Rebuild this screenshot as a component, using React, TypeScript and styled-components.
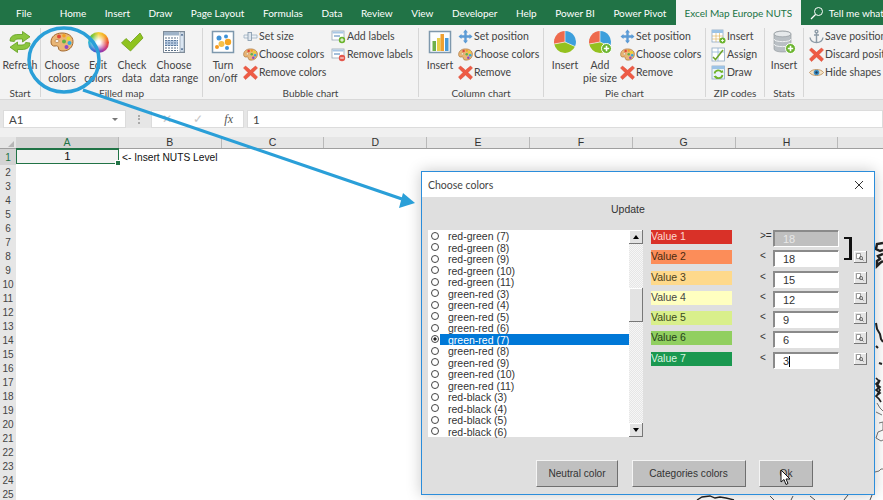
import React from "react";
import styled, { createGlobalStyle } from "styled-components";

const GlobalStyle = createGlobalStyle`
  html, body {
    margin: 0;
    padding: 0;
    background: #fff;
    overflow: hidden;
  }
`;

const ui = `Lato, "Open Sans", sans-serif`;
const dlg = `"Liberation Sans", Arial, sans-serif`;

/* ---------- icons ---------- */

const AddBadge = () => (
  <g>
    <circle cx="18.5" cy="18.5" r="5" fill="#6ab42d" stroke="#fff" strokeWidth="1" />
    <path d="M18.5 15.8v5.4M15.8 18.5h5.4" stroke="#fff" strokeWidth="1.6" />
  </g>
);

const Refresh = () => (
  <svg width="24" height="24" viewBox="0 0 24 24">
    <g fill="#8cc63f" stroke="#5f9e1e" strokeWidth="0.8">
      <path d="M2 11C2 6 6 4.5 10 4.5h4.5V1.5L22 6.8 14.5 12V9H10C8 9 6.8 10 6.3 11.5Z" />
      <path d="M22 13c0 5-4 6.5-8 6.5H9.5v3L2 17.200 9.500 12v3H14c2 0 3.200-1 3.700-2.500Z" />
    </g>
  </svg>
);

const Palette = ({ size = 24 }: { size?: number }) => (
  <svg width={size} height={size} viewBox="0 0 24 24">
    <path
      d="M12 3C5 3 1 7 1 12c0 3 2 4.500 4 4 2-.6 3.500.3 3.500 2 0 2 1.500 3 4.500 3 6 0 10-4 10-9.500S18 3 12 3Z"
      fill="#e9b676"
      stroke="#a4682c"
      strokeWidth="1"
    />
    <ellipse cx="7" cy="11" rx="2" ry="1.500" fill="#fff" stroke="#a4682c" strokeWidth=".6" />
    <circle cx="9" cy="6.500" r="2" fill="#e0473a" />
    <circle cx="14" cy="5.800" r="1.800" fill="#f3a01f" />
    <circle cx="18.500" cy="8.500" r="2" fill="#e8d92c" />
    <circle cx="19.500" cy="13" r="2" fill="#35a9dc" />
    <circle cx="16.500" cy="17" r="2" fill="#9246c4" />
    <circle cx="14" cy="11.500" r="2" fill="#5fb446" />
  </svg>
);

const Check = () => (
  <svg width="24" height="24" viewBox="0 0 24 24">
    <path d="M1.500 13 6 8.500l4.500 4L20 3l3 5-12.500 13Z" fill="#8fc31f" stroke="#6d9e18" strokeWidth=".8" />
  </svg>
);

const DataRange = () => (
  <svg width="24" height="24" viewBox="0 0 24 24">
    <rect x="1.500" y="1.500" width="21" height="21" fill="#fff" stroke="#7f8c99" />
    <rect x="2" y="2" width="15" height="3.500" fill="#9fb3c8" />
    <path d="M3 8h13M3 10.500h13M3 13h13M3 15.500h13M3 18h13M3 20.500h13" stroke="#5b6f86" strokeWidth="1" strokeDasharray="2 1" />
    <rect x="3" y="10" width="13" height="6" fill="#5b86b8" opacity=".45" />
    <rect x="18" y="2" width="4" height="20" fill="#dbe6f2" stroke="#7f8c99" strokeWidth=".6" />
    <path d="M20 3.500l1.300 2h-2.600ZM20 20.500l1.300-2h-2.600Z" fill="#2f4f78" />
  </svg>
);

const Bubbles = () => (
  <svg width="24" height="24" viewBox="0 0 24 24">
    <rect x="1.500" y="1.500" width="21" height="21" fill="#fff" stroke="#7e98ad" strokeWidth="1.500" />
    <circle cx="8" cy="8" r="2.500" fill="#3f93d8" />
    <circle cx="15" cy="6.500" r="2" fill="#3f93d8" />
    <circle cx="17" cy="12" r="3.200" fill="#f5a623" />
    <circle cx="10.500" cy="14" r="3" fill="#f5c04a" />
    <circle cx="6" cy="17" r="2" fill="#f59a23" />
    <circle cx="16" cy="18" r="2" fill="#3f93d8" />
  </svg>
);

const Columns = () => (
  <svg width="24" height="24" viewBox="0 0 24 24">
    <rect x="1.500" y="1.500" width="21" height="21" fill="#fbfdff" stroke="#7e98ad" strokeWidth="1.500" />
    <rect x="4.500" y="11" width="3.500" height="10" fill="#6fb04a" />
    <rect x="9" y="8" width="3.500" height="13" fill="#e8cf4a" />
    <rect x="12.500" y="4" width="3.500" height="17" fill="#f0a030" />
    <rect x="17" y="8" width="3.500" height="13" fill="#4a9ad8" />
  </svg>
);

const Pie = ({ badge = false }: { badge?: boolean }) => (
  <svg width="24" height="24" viewBox="0 0 24 24">
    <path d="M12 12V1a11 11 0 0 1 10 15.500Z" fill="#3d9fdc" />
    <path d="M12 12l10 4.500A11 11 0 0 1 1.200 14Z" fill="#94c11f" />
    <path d="M12 12L1.200 14A11 11 0 0 1 12 1Z" fill="#ee6a4d" />
    <path d="M12 1v11l10 4.500M12 12 1.200 14" stroke="#fff" strokeWidth=".6" fill="none" />
    {badge && <AddBadge />}
  </svg>
);

const Database = () => (
  <svg width="24" height="24" viewBox="0 0 24 24">
    <path d="M2 4c0-4 17-4 17 0v15c0 4-17 4-17 0Z" fill="#b9bfc4" stroke="#8d9398" strokeWidth=".6" />
    <ellipse cx="10.500" cy="4" rx="8.500" ry="2.800" fill="#e6e9eb" stroke="#8d9398" strokeWidth=".6" />
    <path d="M2 9c0 3.500 17 3.500 17 0M2 14c0 3.500 17 3.500 17 0" fill="none" stroke="#f0f2f3" strokeWidth="1" />
    <AddBadge />
  </svg>
);

const Slider = () => (
  <svg width="15" height="15" viewBox="0 0 15 15">
    <path d="M1 6h13v3H1Z" fill="#eef2f6" stroke="#9db0c2" strokeWidth=".8" />
    <rect x="5" y="3.500" width="3.500" height="8" fill="#dfe7ee" stroke="#7f94a8" strokeWidth=".8" />
  </svg>
);

const Cross = () => (
  <svg width="15" height="15" viewBox="0 0 15 15">
    <path
      d="M2.500 1 7.500 5.200 12.500 1 14.500 3 10 7.500 14.500 12 12.500 14.500 7.500 10 2.500 14.500.5 12 5 7.500.5 3Z"
      fill="#ee5b45"
      stroke="#d9452f"
      strokeWidth=".5"
    />
  </svg>
);

const Labels = ({ remove = false }: { remove?: boolean }) => (
  <svg width="15" height="15" viewBox="0 0 15 15">
    <rect x="1" y="2" width="12" height="9" fill="#fff" stroke="#9aa7b3" strokeWidth=".8" />
    <rect x="1.500" y="2.500" width="11" height="2" fill="#a8c6e4" />
    <path d="M3 7h6" stroke="#4a7fb5" strokeWidth="1" />
    <circle cx="11" cy="11" r="3.200" fill={remove ? "#e4574c" : "#6ab42d"} />
    <path d={remove ? "M9.200 11h3.600" : "M9.200 11h3.600M11 9.200v3.600"} stroke="#fff" strokeWidth="1" />
  </svg>
);

const Move = () => (
  <svg width="15" height="15" viewBox="0 0 15 15">
    <path
      d="M7.500.5 10 3.500H8.700v2.800h2.800V5l3 2.500-3 2.500V8.700H8.700v2.800H10l-2.500 3-2.500-3h1.300V8.700H3.500V10l-3-2.500 3-2.500v1.300h2.800V3.500H5Z"
      fill="#5b9bd5"
    />
  </svg>
);

const ZipInsert = () => (
  <svg width="15" height="15" viewBox="0 0 15 15">
    <rect x="1" y="1" width="11" height="12" fill="#fff" stroke="#8fa9c2" strokeWidth=".8" />
    <rect x="1" y="1" width="11" height="3" fill="#9cc3e6" />
    <path d="M1 7h11M1 10h11M5 4v9M8.500 4v9" stroke="#e0b050" strokeWidth=".6" />
    <circle cx="11.500" cy="11.500" r="3" fill="#6ab42d" />
    <path d="M10 11.500h3M11.500 10v3" stroke="#fff" strokeWidth=".8" />
  </svg>
);

const Assign = () => (
  <svg width="15" height="15" viewBox="0 0 15 15">
    <rect x="1" y="1" width="12.500" height="13" fill="#fff" stroke="#8fa9c2" strokeWidth=".8" />
    <path d="M7 1v13M1 5h12.500" stroke="#8fb5d8" strokeWidth=".8" />
    <path d="M2 10l2.500 2.500L12 3" fill="none" stroke="#6fa52a" strokeWidth="1.500" />
  </svg>
);

const DrawZip = () => (
  <svg width="15" height="15" viewBox="0 0 15 15">
    <rect x="1" y="1" width="12.500" height="13" fill="#eaf3fb" stroke="#8fa9c2" strokeWidth=".8" />
    <rect x="1" y="1" width="12.500" height="3" fill="#9cc3e6" />
    <path d="M3.500 8.500A4 4 0 0 1 11 7.500M11.500 10A4 4 0 0 1 4 11" fill="none" stroke="#6fb32a" strokeWidth="1.700" />
    <path d="M9.500 7.500h3l-1-2.500ZM2.500 11h3l-1 2.500Z" fill="#6fb32a" />
  </svg>
);

const Anchor = () => (
  <svg width="15" height="15" viewBox="0 0 15 15">
    <g fill="none" stroke="#8c9aa6" strokeWidth="1.400">
      <circle cx="7.500" cy="2.500" r="1.400" />
      <path d="M7.500 4v9.500M5 6h5M1 8.500c.5 3 3 5 6.500 5s6-2 6.500-5" />
    </g>
  </svg>
);

const Eye = () => (
  <svg width="15" height="15" viewBox="0 0 15 15">
    <path d="M.5 7.500C3 3.500 12 3.500 14.500 7.500 12 11.500 3 11.500.5 7.500Z" fill="#f4e3c8" stroke="#b8864a" strokeWidth=".8" />
    <circle cx="7.500" cy="7.500" r="2.800" fill="#3f8fc4" />
    <circle cx="7.500" cy="7.500" r="1.200" fill="#1d3f5c" />
  </svg>
);

const Search = () => (
  <svg width="14" height="14" viewBox="0 0 14 14">
    <circle cx="8.500" cy="5.500" r="4" fill="none" stroke="#fff" strokeWidth="1" />
    <path d="M5.500 8.500 1 13" stroke="#fff" strokeWidth="1.200" />
  </svg>
);

/* ---------- tab strip ---------- */

const TabStrip = styled.div`
  height: 25px;
  background: #217346;
  display: flex;
  align-items: center;
  padding-left: 16px;
  color: #fff;
  font: 10px ${ui};
  white-space: nowrap;
  overflow: hidden;
`;

const Tab = styled.span<{ $gap?: number }>`
  margin-right: ${(p) => p.$gap ?? 18.5}px;
`;

const ActiveTab = styled.span`
  align-self: stretch;
  width: 125px;
  margin: 0 9px 0 -9px;
  background: #f3f3f3;
  color: #217346;
  display: flex;
  align-items: center;
  justify-content: center;
  flex: none;
`;

const TellMe = styled.span`
  display: flex;
  align-items: center;
  gap: 5px;
`;

/* ---------- ribbon ---------- */

const Ribbon = styled.div`
  height: 75px;
  box-sizing: border-box;
  background: #f3f3f3;
  border-bottom: 1px solid #d8d8d8;
  display: flex;
  color: #444;
  font: 10.5px/13px ${ui};
  white-space: nowrap;
  overflow: hidden;
`;

const Group = styled.div<{ $w: number; $last?: boolean }>`
  width: ${(p) => p.$w}px;
  flex: none;
  box-sizing: border-box;
  margin: 3px 0 2px;
  border-right: ${(p) => (p.$last ? "none" : "1px solid #d6d6d6")};
  display: flex;
  flex-direction: column;
`;

const GroupBody = styled.div<{ $pad?: number }>`
  flex: 1;
  display: flex;
  padding: 2px 0 0 ${(p) => p.$pad ?? 0}px;
`;

const GroupLabel = styled.div`
  height: 13px;
  font-size: 10px;
  text-align: center;
  margin-bottom: -3px;
`;

const Large = styled.div<{ $w: number }>`
  width: ${(p) => p.$w}px;
  flex: none;
  display: flex;
  flex-direction: column;
  align-items: center;
  text-align: center;
`;

const LargeIcon = styled.div`
  height: 24px;
  margin-bottom: 5px;
  display: flex;
  justify-content: center;
`;

const SmallCol = styled.div<{ $w?: number; $gap?: number }>`
  width: ${(p) => (p.$w ? `${p.$w}px` : "auto")};
  flex: none;
  margin: -3px 0 0 ${(p) => p.$gap ?? 0}px;
  display: flex;
  flex-direction: column;
`;

const SmallRow = styled.div`
  height: 18.4px;
  display: flex;
  align-items: center;
  gap: 1px;
`;

const ColorWheel = styled.div`
  width: 21px;
  height: 21px;
  margin-top: 2px;
  border-radius: 50%;
  background: radial-gradient(circle, #ffffff 0 12%, transparent 60%),
    conic-gradient(#f5d33a, #f5a623, #e8503a, #c43a8c, #6b3fc4, #3a7fd8, #35b8d8, #6fc43a, #f5d33a);
`;

type ItemProps = { icon: React.ReactNode; label: string };

const Small = ({ icon, label }: ItemProps) => (
  <SmallRow>
    {icon}
    <span>{label}</span>
  </SmallRow>
);

const Big = ({ icon, w, lines }: { icon: React.ReactNode; w: number; lines: string[] }) => (
  <Large $w={w}>
    <LargeIcon>{icon}</LargeIcon>
    {lines.map((l) => (
      <span key={l}>{l}</span>
    ))}
  </Large>
);

/* ---------- formula bar ---------- */

const FormulaBar = styled.div`
  height: 37px;
  box-sizing: border-box;
  background: linear-gradient(#e6e6e6 0 28px, #f0f0f0 28px);
  padding: 10px 0 9px 3px;
  display: flex;
  color: #444;
  font: 11.5px ${ui};
`;

const Field = styled.div<{ $w?: number }>`
  width: ${(p) => (p.$w ? `${p.$w}px` : "auto")};
  flex: ${(p) => (p.$w ? "none" : 1)};
  background: #fff;
  box-sizing: border-box;
  border: 1px solid #dcdcdc;
  display: flex;
  align-items: center;
  padding: 0 5px;
`;

const Caret = styled.span`
  margin-left: auto;
  margin-right: 2px;
  width: 0;
  height: 0;
  border: 3px solid transparent;
  border-top-color: #777;
  border-bottom: none;
`;

const Grip = styled.div`
  width: 25px;
  flex: none;
  display: flex;
  align-items: center;
  justify-content: center;
  &::before {
    content: "";
    height: 9px;
    border-left: 2px dotted #aaa;
  }
`;

const FxBox = styled(Field)`
  justify-content: space-between;
  padding: 0 10px 0 10px;
  margin-right: 3px;
  color: #c6c6c6;
`;

const Fx = styled.i`
  color: #555;
  font: italic 12px "Liberation Serif", serif;
`;

/* ---------- sheet ---------- */

const HeaderRow = styled.div`
  height: 11px;
  display: flex;
  background: #e6e6e6;
  border-bottom: 1px solid #9f9f9f;
  color: #333;
  font: 10.5px/11px "Liberation Sans", Arial, sans-serif;
`;

const Corner = styled.div`
  width: 16px;
  flex: none;
  position: relative;
  &::after {
    content: "";
    position: absolute;
    right: 2px;
    bottom: 1px;
    border-style: solid;
    border-width: 0 0 6px 6px;
    border-color: transparent transparent #b5b5b5 transparent;
  }
`;

const ColHead = styled.div<{ $on?: boolean }>`
  width: 102.800px;
  flex: none;
  box-sizing: border-box;
  text-align: center;
  border-right: 1px solid #b9b9b9;
  background: ${(p) => (p.$on ? "#d3d3d3" : "transparent")};
  color: ${(p) => (p.$on ? "#217346" : "inherit")};
  box-shadow: ${(p) => (p.$on ? "0 1px 0 #217346" : "none")};
`;

const Sheet = styled.div`
  display: flex;
`;

const RowHeads = styled.div`
  width: 16px;
  flex: none;
  background: #e6e6e6;
  color: #444;
  font: 10px/14px "Liberation Sans", Arial, sans-serif;
  text-align: center;
`;

const RowHead = styled.div<{ $on?: boolean }>`
  height: ${(p) => (p.$on ? 16 : 14)}px;
  line-height: ${(p) => (p.$on ? 18 : 16)}px;
  background: ${(p) => (p.$on ? "#d3d3d3" : "transparent")};
  color: ${(p) => (p.$on ? "#217346" : "inherit")};
`;

const Cells = styled.div`
  flex: 1;
  display: flex;
  align-items: flex-start;
  color: #111;
  font: 10.200px/17px "Liberation Sans", Arial, sans-serif;
`;

const ActiveCell = styled.div`
  width: 103px;
  height: 15px;
  box-sizing: border-box;
  background: #f2f2f2;
  border: 1.500px solid #217346;
  text-align: center;
  line-height: 12px;
  font-size: 11.500px;
  position: relative;
  &::after {
    content: "";
    position: absolute;
    right: -3px;
    bottom: -3px;
    width: 4px;
    height: 4px;
    background: #217346;
    border: 0.500px solid #fff;
  }
`;

const CellText = styled.div`
  padding-left: 3px;
`;

/* ---------- dialog ---------- */

const Dialog = styled.div`
  position: absolute;
  left: 421px;
  top: 171px;
  width: 454px;
  height: 324px;
  box-sizing: border-box;
  border: 1px solid #2b8ddb;
  background: #dfdfdf;
  box-shadow: 0 0 14px rgba(0, 0, 0, 0.22);
  font: 10.500px ${dlg};
  color: #333;
`;

const TitleBar = styled.div`
  height: 25px;
  background: #fff;
  display: flex;
  align-items: center;
  justify-content: space-between;
  padding: 0 10px 0 6px;
  font: 10.500px ${ui};
  color: #444;
`;

const UpdateRow = styled.div`
  height: 24px;
  line-height: 24px;
  padding-left: 189px;
`;

const DialogMain = styled.div`
  margin-top: 9px;
  padding-left: 6px;
  display: flex;
  align-items: flex-start;
`;

const List = styled.div`
  width: 201px;
  height: 207px;
  flex: none;
  background: #fff;
`;

const ListItem = styled.div<{ $on?: boolean }>`
  height: 11.500px;
  display: flex;
  align-items: center;
  padding-left: 3px;
  span:last-child {
    flex: 1;
    height: 100%;
    line-height: 12.500px;
    padding-left: 8px;
    background: ${(p) => (p.$on ? "#0078d7" : "transparent")};
    color: ${(p) => (p.$on ? "#fff" : "#333")};
  }
`;

const Radio = styled.span<{ $on?: boolean }>`
  width: 8px;
  height: 8px;
  flex: none;
  box-sizing: border-box;
  margin-right: 1px;
  border-radius: 50%;
  border: 1px solid #444;
  background: ${(p) => (p.$on ? "radial-gradient(circle, #222 0 35%, #fff 40%)" : "#fff")};
`;

const Scrollbar = styled.div`
  width: 14px;
  height: 207px;
  flex: none;
  display: flex;
  flex-direction: column;
  justify-content: space-between;
  background: repeating-conic-gradient(#f6f6f6 0 25%, #e6e6e6 0 50%) 0 0 / 2px 2px;
  position: relative;
`;

const ScrollButton = styled.div<{ $down?: boolean }>`
  height: 14px;
  background: #e3e3e3;
  border-right: 1px solid #777;
  border-bottom: 1px solid #777;
  box-shadow: inset 1px 1px 0 #fff;
  box-sizing: border-box;
  display: flex;
  align-items: center;
  justify-content: center;
  &::after {
    content: "";
    border: 3px solid transparent;
    ${(p) => (p.$down ? "border-top: 4px solid #000; border-bottom: none;" : "border-bottom: 4px solid #000; border-top: none;")}
  }
`;

const ScrollThumb = styled.div`
  position: absolute;
  left: 0;
  top: 58px;
  width: 14px;
  height: 34px;
  box-sizing: border-box;
  background: #e3e3e3;
  border-right: 1px solid #777;
  border-bottom: 1px solid #777;
  box-shadow: inset 1px 1px 0 #fff;
`;

const Values = styled.div`
  margin-left: 8px;
  display: grid;
  grid-template-columns: 81px 28px 13px 66px 15px 13px;
  grid-auto-rows: 20.250px;
`;

const Swatch = styled.div<{ $bg: string; $fg: string }>`
  grid-column: 1;
  height: 14px;
  background: ${(p) => p.$bg};
  color: ${(p) => p.$fg};
  font-size: 10.500px;
  line-height: 13px;
`;

const Op = styled.div`
  grid-column: 3;
  line-height: 11px;
  font-size: 10px;
  white-space: nowrap;
`;

const ValueInput = styled.div<{ $off?: boolean }>`
  grid-column: 4;
  height: 17px;
  box-sizing: border-box;
  background: ${(p) => (p.$off ? "#bfbfbf" : "#fff")};
  color: ${(p) => (p.$off ? "#e8e8e8" : "#333")};
  border: 1px solid;
  border-color: #8a8a8a #fff #fff #8a8a8a;
  box-shadow: inset 1px 1px 0 #8a8a8a;
  padding-left: 9px;
  line-height: 16px;
  font-size: 11px;
`;

const TextCaret = styled.span`
  display: inline-block;
  width: 1px;
  height: 11px;
  background: #000;
  vertical-align: -2px;
`;

const Picker = styled.div`
  grid-column: 6;
  width: 13px;
  height: 12px;
  margin-top: 1px;
  box-sizing: border-box;
  background: #e4e4e4;
  border-right: 1px solid #777;
  border-bottom: 1px solid #777;
  box-shadow: inset 1px 1px 0 #fff;
  display: flex;
  align-items: center;
  justify-content: center;
`;

const PickerGlyph = () => (
  <svg width="8" height="8" viewBox="0 0 8 8">
    <path d="M.5.5h4v5h-4Z" fill="#fff" stroke="#777" strokeWidth=".7" />
    <circle cx="5" cy="5" r="1.600" fill="none" stroke="#555" strokeWidth=".8" />
    <path d="M6 6l1.500 1.500" stroke="#555" strokeWidth=".8" />
  </svg>
);

const Bracket = styled.div`
  position: absolute;
  left: 422px;
  top: 65px;
  width: 8px;
  height: 23px;
  box-sizing: border-box;
  border: solid #111;
  border-width: 2px 3px 2px 0;
`;

const DialogButtons = styled.div`
  margin-top: 23px;
  padding-left: 114px;
  display: flex;
  gap: 13.500px;
`;

const PushButton = styled.div<{ $w: number }>`
  width: ${(p) => p.$w}px;
  height: 27px;
  box-sizing: border-box;
  background: #c0c0c0;
  border: 1px solid;
  border-color: #f4f4f4 #6f6f6f #6f6f6f #f4f4f4;
  display: flex;
  align-items: center;
  justify-content: center;
  font-size: 10.100px;
`;

const Pointer = styled.svg`
  position: absolute;
  left: 358px;
  top: 297px;
`;

const Overlay = styled.svg`
  position: absolute;
  left: 0;
  top: 0;
  pointer-events: none;
`;

const Page = styled.div`
  width: 883px;
  height: 500px;
  position: relative;
  overflow: hidden;
`;

/* ---------- data ---------- */

const listItems = [
  "red-green (7)", "red-green (8)", "red-green (9)", "red-green (10)", "red-green (11)",
  "green-red (3)", "green-red (4)", "green-red (5)", "green-red (6)", "green-red (7)",
  "green-red (8)", "green-red (9)", "green-red (10)", "green-red (11)",
  "red-black (3)", "red-black (4)", "red-black (5)", "red-black (6)",
];

const values = [
  { label: "Value 1", bg: "#d93128", fg: "#ffd9d0", op: ">=", num: "18" },
  { label: "Value 2", bg: "#fc8d59", fg: "#4a2a10", op: "<", num: "18" },
  { label: "Value 3", bg: "#fed98b", fg: "#4a4020", op: "<", num: "15" },
  { label: "Value 4", bg: "#ffffc0", fg: "#444", op: "<", num: "12" },
  { label: "Value 5", bg: "#d9ef8b", fg: "#3a4a20", op: "<", num: "9" },
  { label: "Value 6", bg: "#91cf60", fg: "#24401a", op: "<", num: "6" },
  { label: "Value 7", bg: "#1a9850", fg: "#d8f5e0", op: "<", num: "3" },
];

const tabs = [
  "Home", "Insert", "Draw", "Page Layout", "Formulas", "Data", "Review",
  "View", "Developer", "Help", "Power BI", "Power Pivot",
];

const rows = Array.from({ length: 25 }, (_, i) => i + 1);
const cols = ["A", "B", "C", "D", "E", "F", "G", "H", "I"];

const App = () => (
  <Page>
    <GlobalStyle />
    <TabStrip>
      <Tab $gap={28}>File</Tab>
      {tabs.map((t) => (
        <Tab key={t}>{t}</Tab>
      ))}
      <ActiveTab>Excel Map Europe NUTS</ActiveTab>
      <TellMe>
        <Search />
        Tell me what you want to do
      </TellMe>
    </TabStrip>

    <Ribbon>
      <Group $w={41}>
        <GroupBody>
          <Big w={40} icon={<Refresh />} lines={["Refresh"]} />
        </GroupBody>
        <GroupLabel>Start</GroupLabel>
      </Group>
      <Group $w={162}>
        <GroupBody $pad={2}>
          <Big w={38} icon={<Palette />} lines={["Choose", "colors"]} />
          <Big w={34} icon={<ColorWheel />} lines={["Edit", "colors"]} />
          <Big w={34} icon={<Check />} lines={["Check", "data"]} />
          <Big w={50} icon={<DataRange />} lines={["Choose", "data range"]} />
        </GroupBody>
        <GroupLabel>Filled map</GroupLabel>
      </Group>
      <Group $w={216}>
        <GroupBody $pad={2}>
          <Big w={36} icon={<Bubbles />} lines={["Turn", "on/off"]} />
          <SmallCol $w={88} $gap={2}>
            <Small icon={<Slider />} label="Set size" />
            <Small icon={<Palette size={15} />} label="Choose colors" />
            <Small icon={<Cross />} label="Remove colors" />
          </SmallCol>
          <SmallCol>
            <Small icon={<Labels />} label="Add labels" />
            <Small icon={<Labels remove />} label="Remove labels" />
          </SmallCol>
        </GroupBody>
        <GroupLabel>Bubble chart</GroupLabel>
      </Group>
      <Group $w={125}>
        <GroupBody $pad={3}>
          <Big w={36} icon={<Columns />} lines={["Insert"]} />
          <SmallCol>
            <Small icon={<Move />} label="Set position" />
            <Small icon={<Palette size={15} />} label="Choose colors" />
            <Small icon={<Cross />} label="Remove" />
          </SmallCol>
        </GroupBody>
        <GroupLabel>Column chart</GroupLabel>
      </Group>
      <Group $w={162}>
        <GroupBody $pad={4}>
          <Big w={34} icon={<Pie />} lines={["Insert"]} />
          <Big w={36} icon={<Pie badge />} lines={["Add", "pie size"]} />
          <SmallCol $gap={2}>
            <Small icon={<Move />} label="Set position" />
            <Small icon={<Palette size={15} />} label="Choose colors" />
            <Small icon={<Cross />} label="Remove" />
          </SmallCol>
        </GroupBody>
        <GroupLabel>Pie chart</GroupLabel>
      </Group>
      <Group $w={59}>
        <GroupBody $pad={5}>
          <SmallCol>
            <Small icon={<ZipInsert />} label="Insert" />
            <Small icon={<Assign />} label="Assign" />
            <Small icon={<DrawZip />} label="Draw" />
          </SmallCol>
        </GroupBody>
        <GroupLabel>ZIP codes</GroupLabel>
      </Group>
      <Group $w={39}>
        <GroupBody>
          <Big w={38} icon={<Database />} lines={["Insert"]} />
        </GroupBody>
        <GroupLabel>Stats</GroupLabel>
      </Group>
      <Group $w={120} $last>
        <GroupBody $pad={5}>
          <SmallCol>
            <Small icon={<Anchor />} label="Save position" />
            <Small icon={<Cross />} label="Discard position" />
            <Small icon={<Eye />} label="Hide shapes" />
          </SmallCol>
        </GroupBody>
      </Group>
    </Ribbon>

    <FormulaBar>
      <Field $w={123}>
        A1
        <Caret />
      </Field>
      <Grip />
      <FxBox $w={93}>
        <span>✕</span>
        <span>✓</span>
        <Fx>fx</Fx>
      </FxBox>
      <Field>1</Field>
    </FormulaBar>

    <HeaderRow>
      <Corner />
      {cols.map((c) => (
        <ColHead key={c} $on={c === "A"}>
          {c}
        </ColHead>
      ))}
    </HeaderRow>

    <Sheet>
      <RowHeads>
        {rows.map((r) => (
          <RowHead key={r} $on={r === 1}>
            {r}
          </RowHead>
        ))}
      </RowHeads>
      <Cells>
        <ActiveCell>1</ActiveCell>
        <CellText>&lt;- Insert NUTS Level</CellText>
      </Cells>
    </Sheet>

    {/* bits of the map that show around the dialog */}
    <Overlay width="883" height="500" viewBox="0 0 883 500">
      <g fill="none" stroke="#222">
        <path d="M883 243l-6 1-1 5 4 2 3-1M883 254l-5 2 2 3-3 2 0 5 3-3 3-2" strokeWidth="2.500" />
        <path d="M876 323l1 6 3 5 1 5 2 3M876 346l2 2M879 363l3 1" strokeWidth="2" />
        <path d="M876 378l3 3-3 3 4 3-4 3 4 3-4 3 3 3 2 3M880 380l-3 6 3 4-3 5" strokeWidth="1.700" />
        <g stroke="#777" strokeWidth="1">
          <path d="M877 403l3 5 3 3M876 412l6 3" />
          <path d="M879 423l4-1 0 8-5 2-2 6 5 3 2-1" />
          <path d="M875 472l4-1 2-2 2 0" />
        </g>
        <path d="M697 500l5-3 8-1 5 2 5-1 6 1 8 2" strokeWidth="1.300" />
        <path d="M770 496l4 4M793 496l-2 4M810 496l5 4M848 495l-4 5M872 495l-2 5" strokeWidth="1" stroke="#555" />
      </g>
    </Overlay>

    <Dialog>
      <TitleBar>
        Choose colors
        <svg width="10" height="10" viewBox="0 0 10 10">
          <path d="M1 1l8 8M9 1l-8 8" stroke="#333" strokeWidth="1" />
        </svg>
      </TitleBar>
      <UpdateRow>Update</UpdateRow>
      <DialogMain>
        <List>
          {listItems.map((item) => (
            <ListItem key={item} $on={item === "green-red (7)"}>
              <Radio $on={item === "green-red (7)"} />
              <span>{item}</span>
            </ListItem>
          ))}
        </List>
        <Scrollbar>
          <ScrollButton />
          <ScrollThumb />
          <ScrollButton $down />
        </Scrollbar>
        <Values>
          {values.map((v, i) => (
            <React.Fragment key={v.label}>
              <Swatch $bg={v.bg} $fg={v.fg}>
                {v.label}
              </Swatch>
              <Op>{v.op}</Op>
              <ValueInput $off={i === 0}>
                {v.num}
                {i === 6 && <TextCaret />}
              </ValueInput>
              {i > 0 && (
                <Picker>
                  <PickerGlyph />
                </Picker>
              )}
            </React.Fragment>
          ))}
        </Values>
      </DialogMain>
      <Bracket />
      <DialogButtons>
        <PushButton $w={82}>Neutral color</PushButton>
        <PushButton $w={114}>Categories colors</PushButton>
        <PushButton $w={54}>Ok</PushButton>
      </DialogButtons>
      <Pointer width="11" height="17" viewBox="0 0 11 17">
        <path d="M1 1v12l3-2.500 2 5 2-1-2-4.500h4Z" fill="#fff" stroke="#111" strokeWidth="1" />
      </Pointer>
    </Dialog>

    {/* hand drawn annotation */}
    <Overlay width="883" height="500" viewBox="0 0 883 500">
      <g fill="none" stroke="#2a9fd8">
        <ellipse cx="64" cy="60" rx="35" ry="32" strokeWidth="3.500" />
        <path d="M83 90 402 199" strokeWidth="3.200" />
      </g>
      <path d="M415 203 403 193 399 208Z" fill="#2a9fd8" />
    </Overlay>
  </Page>
);

export default App;
